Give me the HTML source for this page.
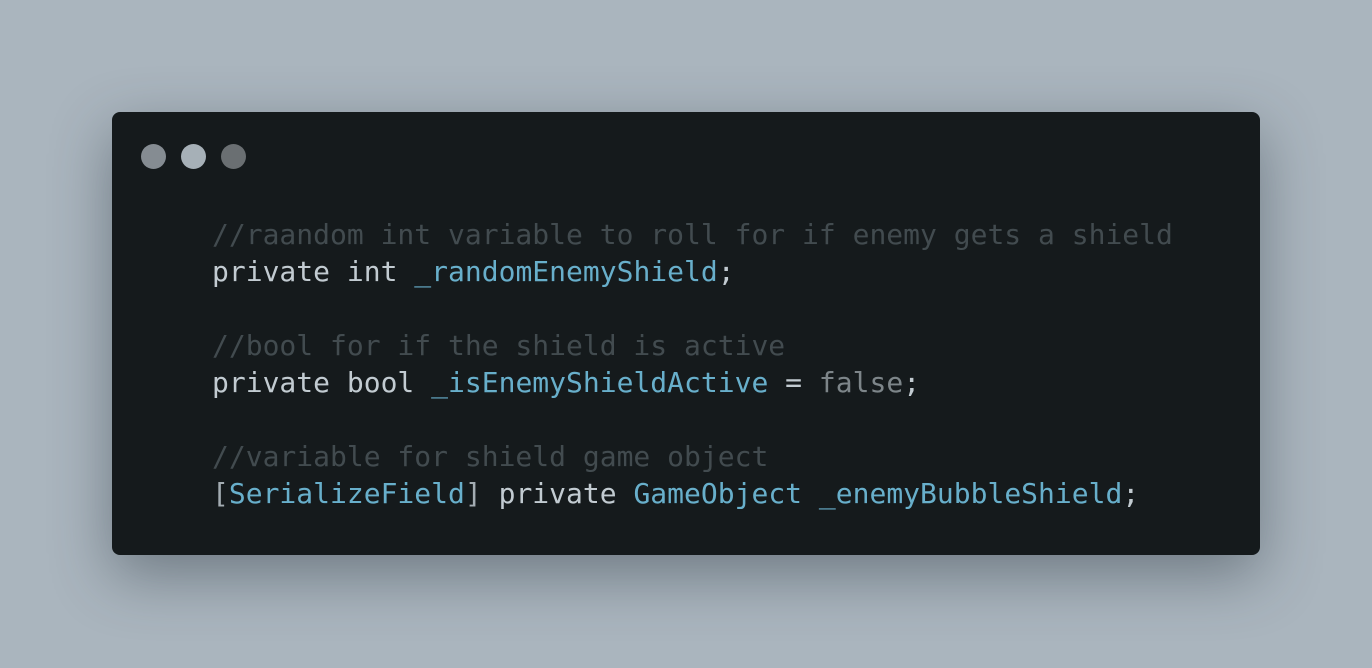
<!DOCTYPE html>
<html><head><style>
html,body{margin:0;padding:0;width:1372px;height:668px;overflow:hidden;background:#aab5be;}
.win{position:absolute;left:112px;top:112px;width:1148px;height:443px;background:#151a1c;border-radius:8px;box-shadow:0 20px 60px rgba(40,50,60,0.45);}
.dot{position:absolute;top:144px;width:25px;height:25px;border-radius:50%;}
pre{position:absolute;left:212px;top:216px;margin:0;font-family:"DejaVu Sans Mono","Liberation Mono",monospace;font-size:28px;line-height:37px;color:#c2cbd1;}
.c{color:#424b4f}.b{color:#68afcb}.f{color:#7d8589}.g{color:#a3acb2}
</style></head><body>
<div class="win"></div>
<div class="dot" style="left:141px;background:#858c92"></div>
<div class="dot" style="left:181px;background:#a6b0b7"></div>
<div class="dot" style="left:221px;background:#6a6f72"></div>
<pre><span class="c">//raandom int variable to roll for if enemy gets a shield</span>
private int <span class="b">_randomEnemyShield</span>;

<span class="c">//bool for if the shield is active</span>
private bool <span class="b">_isEnemyShieldActive</span> = <span class="f">false</span>;

<span class="c">//variable for shield game object</span>
<span class="g">[</span><span class="b">SerializeField</span><span class="g">]</span> private <span class="b">GameObject</span> <span class="b">_enemyBubbleShield</span>;</pre>
</body></html>
